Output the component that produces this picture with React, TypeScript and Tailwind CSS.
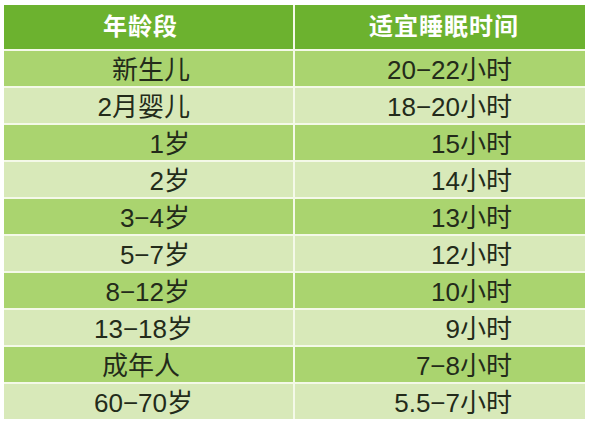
const ROWS = [
  { age: '新生儿', hours: '20−22小时', agePr: 'pr-[103px]' },
  { age: '2月婴儿', hours: '18−20小时', agePr: 'pr-[103px]' },
  { age: '1岁', hours: '15小时', agePr: 'pr-[103px]' },
  { age: '2岁', hours: '14小时', agePr: 'pr-[103px]' },
  { age: '3−4岁', hours: '13小时', agePr: 'pr-[103px]' },
  { age: '5−7岁', hours: '12小时', agePr: 'pr-[103px]' },
  { age: '8−12岁', hours: '10小时', agePr: 'pr-[103px]' },
  { age: '13−18岁', hours: '9小时', agePr: 'pr-[100px]' },
  { age: '成年人', hours: '7−8小时', agePr: 'pr-[113px]' },
  { age: '60−70岁', hours: '5.5−7小时', agePr: 'pr-[100px]' },
]

export default function App() {
  return (
    <div className="w-[600px] h-[424px] bg-white pt-[5px] pl-[4px] font-['Liberation_Sans','Noto_Sans_CJK_SC',sans-serif]">
      <div className="grid grid-cols-[289px_290px] gap-[2px] bg-[#f4f9e8] w-[581px]">
        {/* header */}
        <div className="h-[44px] bg-[#6cb22f] flex items-center justify-center pr-[16px] text-white text-[24px] font-bold tracking-[1px]">
          年龄段
        </div>
        <div className="h-[44px] bg-[#6cb22f] flex items-center justify-end pr-[66px] text-white text-[24px] font-bold tracking-[1px]">
          适宜睡眠时间
        </div>

        {ROWS.map((row, i) => {
          const bg = i % 2 === 0 ? 'bg-[#aad46f]' : 'bg-[#d8e9b9]'
          return [
            <div key={`a${i}`} className={`h-[35px] ${bg} flex items-center justify-end pt-[2px] ${row.agePr} text-[26px] text-[#232b1a] leading-none`}>
              {row.age}
            </div>,
            <div key={`h${i}`} className={`h-[35px] ${bg} flex items-center justify-end pt-[2px] pr-[73px] text-[26px] text-[#232b1a] leading-none`}>
              {row.hours}
            </div>,
          ]
        })}
      </div>
    </div>
  )
}
